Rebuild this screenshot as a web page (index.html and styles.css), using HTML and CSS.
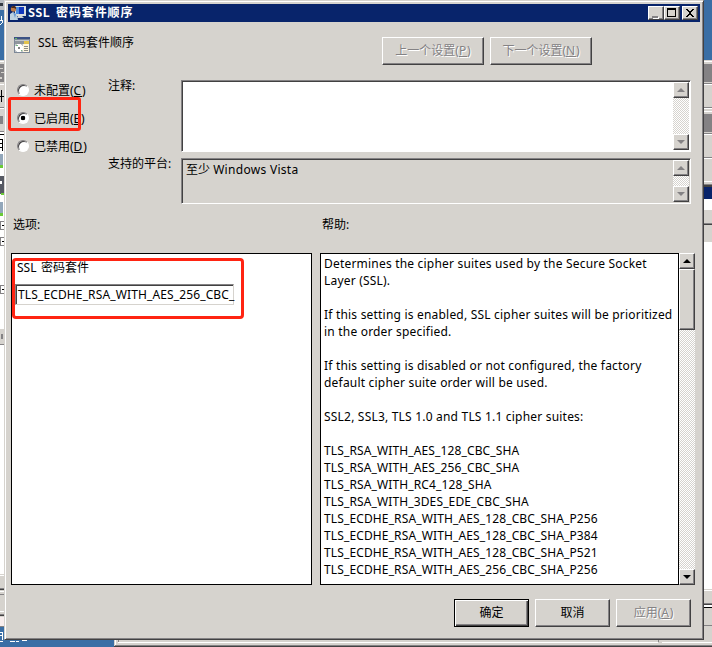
FILE: index.html
```html
<!DOCTYPE html>
<html lang="zh-CN">
<head>
<meta charset="utf-8">
<title>SSL 密码套件顺序</title>
<link rel="stylesheet" href="styles.css">
</head>
<body>
<div class="desktop">
  <svg class="edge-left" width="4" height="640" viewBox="0 0 4 640" shape-rendering="crispEdges">
    <path fill="#3a6ea5" d="M0 0h4v640H0z"/>
    <path fill="#b9bdc2" d="M0 0h4v10H0z"/><path fill="#353b43" d="M0 3h3v3H0z"/>
    <path stroke="#fff" d="M1 16v4M0 20h3M2 20v3M0 25l2-2"/>
    <path fill="#d6d3ce" d="M0 60h4v90H0z"/><path fill="#fff" d="M0 61h4v1H0zM0 84h4v1H0zM0 108h4v1H0zM0 132h4v20H0z"/>
    <path fill="#848284" d="M0 64h4v18H0zM0 107h4v1H0zM0 116h3v8H0zM0 131h4v1H0z"/>
    <path fill="#d6d3ce" d="M0 68h3v1H0zM1 72h3v1H1zM0 77h2v2H0z"/>
    <path fill="#000" d="M0 96h4v1H0zM1 90h1v12H1zM0 134h4v1H0zM2 139h1v12H2zM0 139h3v1H0zM0 143h3v1H0zM0 147h3v1H0z"/>
    <path fill="#fff" d="M0 152h4v423H0z"/>
    <path fill="#93a7ba" d="M0 154h3v14H0zM0 202h3v14H0z"/><path fill="#565963" d="M0 176h4v18H0z"/>
    <path fill="#6bca37" d="M0 165h3v3H0zM1 193h3v2H1zM0 213h3v3H0z"/>
    <path fill="#fff" d="M0 181h2v3H0z"/>
    <path fill="none" stroke="#848284" d="M4 221.500H.5v8H4M4 237.500H.5v8H4M4 285.500H.5v8H4"/>
    <path fill="#000" d="M2 225h2v1H2zM2 241h2v1H2zM2 289h2v1H2z"/>
    <path fill="#d6d3ce" d="M0 329h4v16H0zM0 574h4v53H0z"/><path fill="#848284" d="M1 334h2v5H1zM0 344h4v1H0zM0 588h4v1H0zM0 594h4v1H0zM0 614h4v1H0zM0 626h4v1H0z"/>
    <path fill="#424142" d="M0 589h4v1H0zM0 615h4v1H0z"/><path fill="#fff" d="M0 575h4v1H0zM0 591h4v1H0zM0 611h4v1H0z"/>
    <path fill="#f8eeee" d="M0 617h4v9H0z"/>
    <path stroke="#fff" fill="none" d="M0 632.500h2.500v7M0 635.500h2"/>
  </svg>

  <main class="dialog">
    <header class="titlebar">
      <svg class="app-icon" width="16" height="16" viewBox="0 0 16 16">
        <path d="M5 1h11v10H5z" fill="#d9dedf"/><path d="M6 2h8v7H6z" fill="#1238bd"/><path d="M6 2h3v7H6z" fill="#4d8dde"/>
        <path d="M8 11h4l2 2H7z" fill="#ced3d3"/><circle cx="3.500" cy="4" r="2.700" fill="#bc7b48"/><path d="M1 3a3 3 0 0 1 5-1v2L4 3z" fill="#4a291b"/>
        <path d="M0 15V9l3-2 4 3 1 5z" fill="#bdd2e1"/><path d="M3 7l2 6 1-4z" fill="#6799d4"/>
      </svg>
      <h1><span class="title-latin">SSL</span>密码套件顺序</h1>
      <div class="caption-buttons">
        <span class="cap"><svg width="14" height="12" shape-rendering="crispEdges"><path d="M4 10h6v2H4z" fill="#fff"/><path d="M3 9h6v2H3z" fill="#848284"/></svg></span>
        <span class="cap"><svg width="14" height="12" shape-rendering="crispEdges"><path d="M2 1h9v9H2zM3 3v6h7V3z" fill-rule="evenodd"/></svg></span>
        <span class="cap close"><svg width="14" height="12" shape-rendering="crispEdges"><path d="M3 2h2v1h1v1h2V3h1V2h2v1h-1v1H9v1H8v2h1v1h1v1h1v1H9V9H8V8H6v1H5v1H3V9h1V8h1V7h1V5H5V4H4V3H3z"/></svg></span>
      </div>
    </header>

    <section class="heading">
      <svg class="setting-icon" width="16" height="16" viewBox="0 0 16 16" shape-rendering="crispEdges">
        <path d="M0 0h16v16H0z" fill="#7d8898"/><path d="M1 3h14v12H1z" fill="#c3c7cb"/><path d="M0 0h16v2H0z" fill="#3c5284"/><path d="M1 1h2v1H1z" fill="#66bd64"/>
        <path d="M1 4h9v3H1z" fill="#8f959c"/><path d="M10 4h5v3h-5z" fill="#e3c34c"/><circle cx="5" cy="11" r="4" fill="#fff"/><path d="M4 10h2v2H4z" fill="#848284"/><path d="M2 8h2v1H2zM7 13h1v1H7z" fill="#73b77a"/>
        <path d="M9 7h6v8H9z" fill="#fff6dd"/><path d="M10 9h4v1h-4zM10 11h4v1h-4zM10 13h4v1h-4z" fill="#8e8d86"/>
      </svg>
      <h2><span class="latin">SSL</span> 密码套件顺序</h2>
      <div class="nav">
        <button class="btn disabled">上一个设置(<u>P</u>)</button>
        <button class="btn disabled">下一个设置(<u>N</u>)</button>
      </div>
    </section>

    <section class="state">
      <div class="radios">
        <label><i class="radio"></i>未配置(<u>C</u>)</label>
        <label class="marked"><i class="radio on"></i>已启用(<u>E</u>)</label>
        <label><i class="radio"></i>已禁用(<u>D</u>)</label>
      </div>
      <div class="fields">
        <div class="field-label">注释:</div>
        <div class="sunken comment">
          <div class="content"></div>
          <div class="scroll"><b class="arrow up off"></b><b class="arrow down off"></b></div>
        </div>
        <div class="field-label">支持的平台:</div>
        <div class="sunken platform">
          <div class="content">至少 <span class="vista">Windows Vista</span></div>
          <div class="scroll"><b class="arrow up off"></b><b class="arrow down off"></b></div>
        </div>
      </div>
    </section>

    <section class="captions"><span>选项:</span><span>帮助:</span></section>

    <section class="panels">
      <div class="options">
        <div class="options-label"><span class="latin">SSL</span> 密码套件</div>
        <div class="input"><span class="caps">TLS_ECDHE_RSA_WITH_AES_256_CBC_</span></div>
        <div class="marker"></div>
      </div>
      <div class="help">
        <div class="help-text">
          <p>Determines the cipher suites used by the Secure Socket<br>Layer (SSL).</p>
          <p>If this setting is enabled, SSL cipher suites will be prioritized<br>in the order specified.</p>
          <p>If this setting is disabled or not configured, the factory<br>default cipher suite order will be used.</p>
          <p>SSL2, SSL3, TLS 1.0 and TLS 1.1 cipher suites:</p>
          <p class="caps">TLS_RSA_WITH_AES_128_CBC_SHA<br>TLS_RSA_WITH_AES_256_CBC_SHA<br>TLS_RSA_WITH_RC4_128_SHA<br>TLS_RSA_WITH_3DES_EDE_CBC_SHA<br>TLS_ECDHE_RSA_WITH_AES_128_CBC_SHA_P256<br>TLS_ECDHE_RSA_WITH_AES_128_CBC_SHA_P384<br>TLS_ECDHE_RSA_WITH_AES_128_CBC_SHA_P521<br>TLS_ECDHE_RSA_WITH_AES_256_CBC_SHA_P256</p>
        </div>
        <div class="scroll"><b class="arrow up"></b><b class="thumb"></b><b class="arrow down"></b></div>
      </div>
    </section>

    <footer class="actions">
      <button class="btn default">确定</button>
      <button class="btn">取消</button>
      <button class="btn disabled">应用(<u>A</u>)</button>
    </footer>
  </main>

  <div class="edge-right"></div>
  <svg class="edge-bottom" width="712" height="7" viewBox="0 0 712 7" shape-rendering="crispEdges">
    <path fill="#3a6ea5" d="M0 0h114v7H0z"/><path fill="#d6d3ce" d="M114 0h598v7H114z"/>
    <path fill="#fff" d="M115 0h1v6h-1zM118 2h540v1H118zM662 2h50v1h-50zM0 1h3v1H0zM10 1h5v1h-5zM16 1h3v1h-3zM22 0h5v1h-5z"/>
    <path fill="#848284" d="M118 0h1v2h-1zM658 0h1v2h-1zM115 5h597v1H115z"/><path fill="#424142" d="M114 6h598v1H114z"/>
  </svg>
</div>
</body>
</html>
```

FILE: styles.css
```css
*, *::before, *::after { box-sizing: border-box; }
body {
  margin: 0;
  font: 12px/17px "Noto Sans", "Noto Sans CJK SC", sans-serif;
  color: #000;
}
.desktop {
  width: 712px;
  height: 647px;
  overflow: hidden;
  display: grid;
  grid-template-columns: 4px 700px 8px;
  grid-template-rows: 640px 7px;
}
svg { display: block; }
u { letter-spacing: 0.8px; }
.edge-bottom { grid-column: 1 / 4; }
.edge-right {
  background: linear-gradient(
    #3a6ea5 60px, #d6d3ce 60px 61px, #fff 61px 62px, #d6d3ce 62px 64px,
    #848284 64px 82px, #d6d3ce 82px 83px, #848284 83px 84px, #fff 84px 85px,
    #d6d3ce 85px 107px, #848284 107px 108px, #fff 108px 109px, #d6d3ce 109px 111px, #fff 111px 112px, #d6d3ce 112px 114px,
    #848284 114px 132px, #d6d3ce 132px 133px, #848284 133px 134px, #fff 134px 135px,
    #d6d3ce 135px 157px, #848284 157px 158px, #fff 158px 159px, #d6d3ce 159px 181px, #fff 181px 182px, #d6d3ce 182px 184px,
    #848284 184px 185px, #424142 185px 187px, #08246b 187px 199px, #fff 199px 210px,
    #d6d3ce 210px 223px, #848284 223px 224px, #424142 224px 225px, #d6d3ce 225px 242px,
    #fff 242px 589px, #d6d3ce 589px 590px, #fff 590px 591px, #d6d3ce 591px 603px,
    #848284 603px 604px, #424142 604px 605px, #fff 605px 607px, #000 607px 608px,
    #d6d3ce 608px 625px, #848284 625px 626px, #d6d3ce 626px);
}
.dialog {
  display: flex;
  flex-direction: column;
  padding: 2px;
  background: #d6d3ce;
  border: 1px solid;
  border-color: #d6d3ce #424142 #424142 #d6d3ce;
  box-shadow: inset 1px 1px #fff, inset -1px -1px #848284;
}
.titlebar {
  display: flex;
  align-items: center;
  height: 18px;
  margin: 1px 1px 0;
  padding: 0 2px;
  background: #08246b;
  color: #fff;
}
h1, h2 { margin: 0; font-size: 12px; }
h1 { margin-left: 2px; letter-spacing: 0.9px; line-height: 18px; white-space: nowrap; }
.title-latin { display: inline-block; width: 28px; font-family: "DejaVu Sans Mono", monospace; letter-spacing: 0; }
.caption-buttons { display: flex; margin-left: auto; }
.cap {
  width: 16px;
  height: 14px;
  background: #d6d3ce;
  border: 1px solid;
  border-color: #fff #424142 #424142 #fff;
  box-shadow: inset -1px -1px #848284;
}
.cap.close { margin-left: 2px; }
.heading { display: flex; height: 58px; padding: 15px 0 0 7px; }
h2 { margin: -3px 0 0 8px; width: 344px; font-weight: normal; }
.latin { display: inline-block; width: 21px; }
.nav { display: flex; gap: 6px; }
.btn {
  width: 102px;
  height: 28px;
  padding: 0 0 2px;
  font: inherit;
  color: #000;
  background: #d6d3ce;
  border: 1px solid;
  border-color: #fff #424142 #424142 #fff;
  box-shadow: inset -1px -1px #848284;
}
.disabled { color: #848284; text-shadow: 1px 1px #fff; }
.state { display: flex; height: 135px; }
.radios { width: 101px; margin-top: -4px; }
.radios label { position: relative; display: flex; align-items: center; height: 28px; margin-left: 10px; }
.radio {
  width: 12px;
  height: 12px;
  margin-right: 5px;
  border: 1px solid;
  border-color: #848284 #fff #fff #848284;
  border-radius: 50%;
  background: #fff;
  box-shadow: inset 1px 1px #424142;
}
.radio.on { background: radial-gradient(circle at 5px 5px, #000 2px, #fff 2.600px); }
.marked::after {
  content: "";
  position: absolute;
  left: -9px;
  top: -7px;
  width: 73px;
  height: 34px;
  border: 3px solid #ff2412;
  border-radius: 3px;
}
.fields {
  display: grid;
  grid-template-columns: 73px 510px;
  grid-template-rows: 72px 46px;
  row-gap: 6px;
  align-content: start;
}
.field-label { margin-top: -3px; }
.sunken {
  display: flex;
  border: 1px solid;
  border-color: #848284 #fff #fff #848284;
  box-shadow: inset 1px 1px #424142;
  padding: 1px;
}
.sunken .content { flex: 1; padding: 1px 3px; }
.comment { background: linear-gradient(#fff, #fff) padding-box; }
.vista { letter-spacing: 0.3px; }
.scroll {
  width: 16px;
  display: flex;
  flex-direction: column;
  background: repeating-conic-gradient(#d6d3ce 0 25%, #fff 0 50%) 0 0 / 2px 2px;
}
.arrow {
  display: grid;
  place-items: center;
  height: 16px;
  background: #d6d3ce;
  border: 1px solid;
  border-color: #fff #424142 #424142 #fff;
  box-shadow: inset -1px -1px #848284;
}
.arrow::before {
  content: "";
  width: 8px;
  height: 4px;
  background: #000;
  clip-path: polygon(50% 0, 100% 100%, 0 100%);
}
.arrow.down { margin-top: auto; }
.arrow.down::before { clip-path: polygon(0 0, 100% 0, 50% 100%); }
.arrow.off::before { background: #848284; }
.thumb {
  height: 61px;
  background: #d6d3ce;
  border: 1px solid;
  border-color: #fff #424142 #424142 #fff;
  box-shadow: inset -1px -1px #848284;
}
.captions { display: flex; height: 38px; padding: 1px 0 0 6px; }
.captions span { width: 309px; }
.panels { display: flex; gap: 8px; height: 332px; padding-left: 4px; }
.options { position: relative; width: 301px; padding: 5px 4px; background: #fff; border: 1px solid #000; }
.options-label { padding-left: 1px; }
.input {
  width: 219px;
  height: 21px;
  margin: 8px 0 0 -1px;
  padding: 1px 0 1px 2px;
  border: 1px solid;
  border-color: #848284 #d6d3ce #d6d3ce #848284;
  box-shadow: inset 1px 1px #424142;
  white-space: nowrap;
}
.marker {
  position: absolute;
  left: 0;
  top: 4px;
  width: 232px;
  height: 61px;
  border: 3px solid #ff2412;
  border-radius: 4px;
}
.help { display: flex; }
.help-text { width: 359px; padding: 1px 3px; background: #fff; border: 1px solid #000; white-space: nowrap; letter-spacing: 0.2px; }
.help p { margin: 0 0 17px; }
.help p:last-child { margin-bottom: 0; }
.caps, .help p.caps { letter-spacing: 0.13px; }
.actions { display: flex; gap: 6px; margin: 14px 10px 0 auto; }
.actions .btn { width: 75px; }
.default { border-color: #000; box-shadow: inset 1px 1px #fff, inset -1px -1px #424142, inset -2px -2px #848284; }
```
